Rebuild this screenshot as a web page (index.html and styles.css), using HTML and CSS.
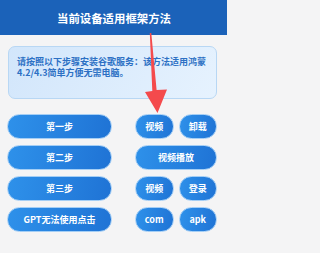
FILE: index.html
```html
<!DOCTYPE html>
<html lang="zh-CN">
<head>
<meta charset="utf-8">
<title>当前设备适用框架方法</title>
<link rel="stylesheet" href="styles.css">
</head>
<body>
<header class="header">当前设备适用框架方法</header>
<main class="content">
  <div class="card">请按照以下步骤安装谷歌服务：该方法适用鸿蒙4.2/4.3简单方便无需电脑。</div>
  <div class="rows">
    <div class="row">
      <button class="btn main">第一步</button>
      <div class="side"><button class="btn">视频</button><button class="btn">卸载</button></div>
    </div>
    <div class="row">
      <button class="btn main">第二步</button>
      <div class="side"><button class="btn">视频播放</button></div>
    </div>
    <div class="row">
      <button class="btn main">第三步</button>
      <div class="side"><button class="btn">视频</button><button class="btn">登录</button></div>
    </div>
    <div class="row">
      <button class="btn main">GPT无法使用点击</button>
      <div class="side"><button class="btn">com</button><button class="btn">apk</button></div>
    </div>
  </div>
</main>
<svg class="arrow" width="227" height="253" viewBox="0 0 227 253" aria-hidden="true">
  <polygon points="149.8,33 151.3,33 156.6,90 167,89.5 157.5,113 145,92 152.3,91" fill="#f44a4c"/>
</svg>
</body>
</html>
```
FILE: styles.css
```css
html {
  margin: 0;
  padding: 0;
  background: #f4f4f5;
}
body {
  margin: 0;
  padding: 0;
  width: 227px;
  height: 253px;
  background: #f4f4f5;
  font-family: "Noto Sans CJK SC", "Noto Sans", sans-serif;
  position: relative;
  overflow: hidden;
}
.header {
  height: 35px;
  background: #1b62b9;
  color: #ffffff;
  font-size: 11.4px;
  font-weight: 700;
  display: flex;
  align-items: center;
  justify-content: center;
  padding-left: 1px;
}
.content {
  padding: 11px 10px 0 8px;
}
.card {
  box-sizing: border-box;
  height: 53px;
  border: 1px solid #b8d7f4;
  border-radius: 7px;
  background: linear-gradient(120deg, #d2e6fb 0%, #e6f2fe 100%);
  padding: 9px 6px 0 8px;
  color: #2c70c4;
  font-size: 9px;
  font-weight: 700;
  line-height: 11px;
}
.rows {
  margin-top: 15px;
  margin-left: -1px;
  display: flex;
  flex-direction: column;
  gap: 6px;
}
.row {
  display: flex;
  height: 25px;
}
.side {
  display: flex;
  gap: 5px;
  width: 82px;
  margin-left: 23px;
}
.btn {
  box-sizing: border-box;
  flex: 1;
  height: 25px;
  margin: 0;
  padding: 0;
  border: 1px solid #a4cef5;
  border-radius: 12.5px;
  background: linear-gradient(100deg, #2e91ea 0%, #1f73d5 100%);
  color: #ffffff;
  font-family: "Noto Sans CJK SC", "Noto Sans", sans-serif;
  font-size: 9px;
  font-weight: 700;
  white-space: nowrap;
}
.btn.main {
  flex: none;
  width: 105px;
}
.arrow {
  position: absolute;
  top: 0;
  left: 0;
  pointer-events: none;
}
```
